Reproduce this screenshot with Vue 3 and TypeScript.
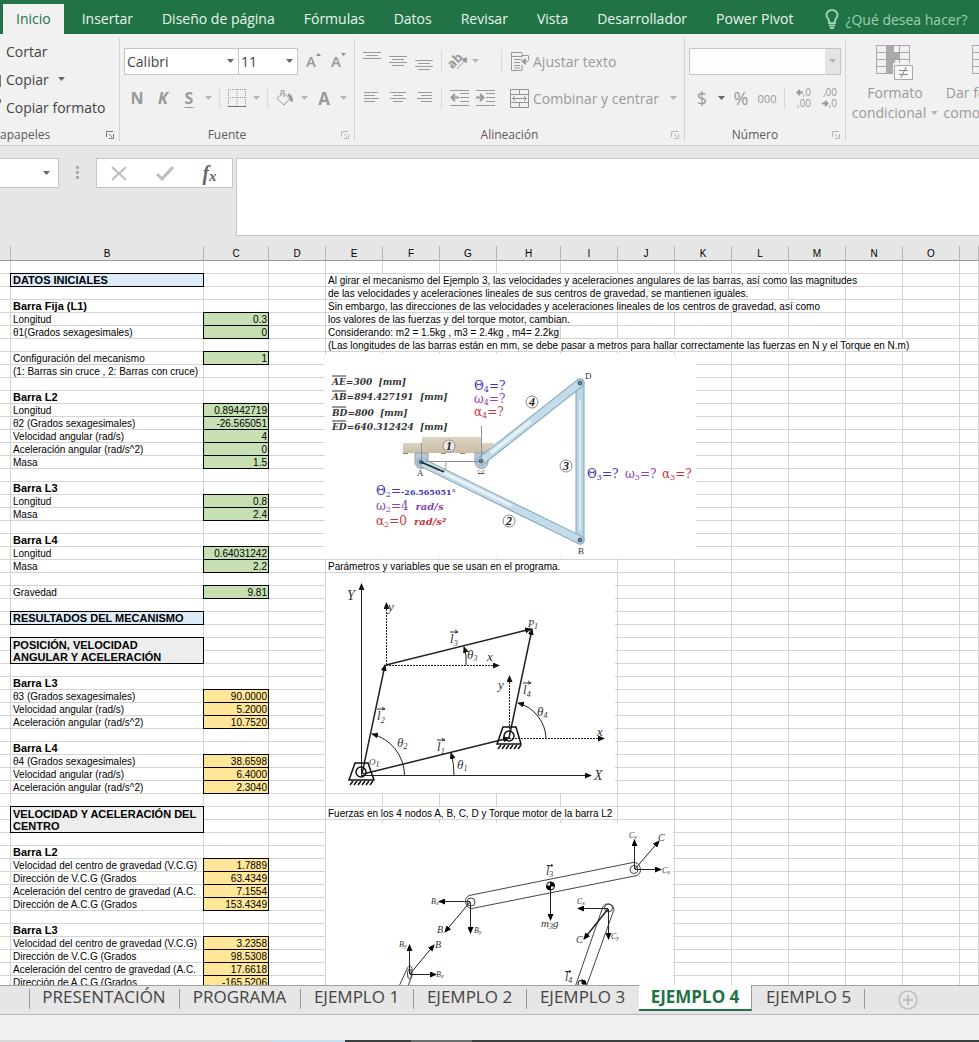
<script setup lang="ts">
type Tone = 'green' | 'gold'
interface RowData {
  label?: string
  kind?: 'bold' | 'blue' | 'grey'
  value?: string
  tone?: Tone
  note?: string
  span?: number
  covered?: boolean
}
interface Mark {
  x: number
  y: number
  t: string
  s?: string
  size?: number
}

const menu = ['Inicio', 'Insertar', 'Diseño de página', 'Fórmulas', 'Datos', 'Revisar', 'Vista', 'Desarrollador', 'Power Pivot']
const columns = ['', 'B', 'C', 'D', 'E', 'F', 'G', 'H', 'I', 'J', 'K', 'L', 'M', 'N', 'O', '']
const noteColumns = 12

const content: Record<number, RowData> = {
  1: { label: 'DATOS INICIALES', kind: 'blue', note: 'Al girar el mecanismo del Ejemplo 3, las velocidades y aceleraciones angulares de las barras, así como las magnitudes', span: 10 },
  2: { note: 'de las velocidades y aceleraciones lineales de sus centros de gravedad, se mantienen iguales.', span: 8 },
  3: { label: 'Barra Fija (L1)', kind: 'bold', note: 'Sin embargo, las direcciones de las velocidades y aceleraciones lineales de los centros de gravedad, así como', span: 9 },
  4: { label: 'Longitud', value: '0.3', tone: 'green', note: 'los valores de las fuerzas y del torque motor, cambian.', span: 5 },
  5: { label: 'θ1(Grados sexagesimales)', value: '0', tone: 'green', note: 'Considerando: m2 = 1.5kg , m3 = 2.4kg , m4= 2.2kg', span: 4 },
  6: { note: '(Las longitudes de las barras están en mm, se debe pasar a metros para hallar correctamente las fuerzas en N y el Torque en N.m)', span: 11 },
  7: { label: 'Configuración del mecanismo', value: '1', tone: 'green' },
  8: { label: '(1: Barras sin cruce , 2: Barras con cruce)' },
  10: { label: 'Barra L2', kind: 'bold' },
  11: { label: 'Longitud', value: '0.89442719', tone: 'green' },
  12: { label: 'θ2 (Grados sexagesimales)', value: '-26.565051', tone: 'green' },
  13: { label: 'Velocidad angular (rad/s)', value: '4', tone: 'green' },
  14: { label: 'Aceleración angular (rad/s^2)', value: '0', tone: 'green' },
  15: { label: 'Masa', value: '1.5', tone: 'green' },
  17: { label: 'Barra L3', kind: 'bold' },
  18: { label: 'Longitud', value: '0.8', tone: 'green' },
  19: { label: 'Masa', value: '2.4', tone: 'green' },
  21: { label: 'Barra L4', kind: 'bold' },
  22: { label: 'Longitud', value: '0.64031242', tone: 'green' },
  23: { label: 'Masa', value: '2.2', tone: 'green', note: 'Parámetros y variables que se usan en el programa.', span: 5 },
  25: { label: 'Gravedad', value: '9.81', tone: 'green' },
  27: { label: 'RESULTADOS DEL MECANISMO', kind: 'blue' },
  29: { label: 'POSICIÓN, VELOCIDAD\nANGULAR Y ACELERACIÓN', kind: 'grey' },
  30: { covered: true },
  32: { label: 'Barra L3', kind: 'bold' },
  33: { label: 'θ3 (Grados sexagesimales)', value: '90.0000', tone: 'gold' },
  34: { label: 'Velocidad angular (rad/s)', value: '5.2000', tone: 'gold' },
  35: { label: 'Aceleración angular (rad/s^2)', value: '10.7520', tone: 'gold' },
  37: { label: 'Barra L4', kind: 'bold' },
  38: { label: 'θ4 (Grados sexagesimales)', value: '38.6598', tone: 'gold' },
  39: { label: 'Velocidad angular (rad/s)', value: '6.4000', tone: 'gold' },
  40: { label: 'Aceleración angular (rad/s^2)', value: '2.3040', tone: 'gold' },
  42: { label: 'VELOCIDAD Y ACELERACIÓN DEL\nCENTRO', kind: 'grey', note: 'Fuerzas en los 4 nodos A, B, C, D y Torque motor de la barra L2', span: 5 },
  43: { covered: true },
  45: { label: 'Barra L2', kind: 'bold' },
  46: { label: 'Velocidad del centro de gravedad (V.C.G)', value: '1.7889', tone: 'gold' },
  47: { label: 'Dirección de V.C.G (Grados', value: '63.4349', tone: 'gold' },
  48: { label: 'Aceleración del centro de gravedad (A.C.', value: '7.1554', tone: 'gold' },
  49: { label: 'Dirección de A.C.G (Grados', value: '153.4349', tone: 'gold' },
  51: { label: 'Barra L3', kind: 'bold' },
  52: { label: 'Velocidad del centro de gravedad (V.C.G)', value: '3.2358', tone: 'gold' },
  53: { label: 'Dirección de V.C.G (Grados', value: '98.5308', tone: 'gold' },
  54: { label: 'Aceleración del centro de gravedad (A.C.', value: '17.6618', tone: 'gold' },
  55: { label: 'Dirección de A.C.G (Grados', value: '-165.5206', tone: 'gold' },
}
const rows: RowData[] = Array.from({ length: 56 }, (_, i) => content[i] ?? {})

const sheets = [
  { name: 'PRESENTACIÓN', size: 'w150' },
  { name: 'PROGRAMA', size: 'w121' },
  { name: 'EJEMPLO 1', size: 'w113' },
  { name: 'EJEMPLO 2', size: 'w113' },
  { name: 'EJEMPLO 3', size: 'w113' },
  { name: 'EJEMPLO 4', size: 'w113', active: true },
  { name: 'EJEMPLO 5', size: 'w113' },
]

const lengths = [
  { y: 385, a: 'AE', b: '=300  [mm]' },
  { y: 400, a: 'AB', b: '=894.427191  [mm]' },
  { y: 416, a: 'BD', b: '=800  [mm]' },
  { y: 430, a: 'ED', b: '=640.312424  [mm]' },
]
const unknowns = [
  { x: 474, y: 390, g: 'Θ', n: '4', c: 'blue' },
  { x: 474, y: 403, g: 'ω', n: '4', c: 'violet' },
  { x: 474, y: 416, g: 'α', n: '4', c: 'red' },
  { x: 587, y: 478, g: 'Θ', n: '3', c: 'blue' },
  { x: 625, y: 478, g: 'ω', n: '3', c: 'violet' },
  { x: 662, y: 478, g: 'α', n: '3', c: 'red' },
]
const badges = [
  { x: 449, y: 446, n: '1' },
  { x: 509, y: 521, n: '2' },
  { x: 566, y: 466, n: '3' },
  { x: 532, y: 402, n: '4' },
]
const vectors: Mark[] = [
  { x: 450, y: 643, t: 'l', s: '3' },
  { x: 377, y: 720, t: 'l', s: '2' },
  { x: 437, y: 751, t: 'l', s: '1' },
  { x: 523, y: 694, t: 'l', s: '4' },
]
const kinematic: Mark[] = [
  { x: 347, y: 600, t: 'Y', size: 14 },
  { x: 594, y: 780, t: 'X', size: 14 },
  { x: 388, y: 611, t: 'y' },
  { x: 487, y: 661, t: 'x' },
  { x: 498, y: 689, t: 'y' },
  { x: 597, y: 736, t: 'x' },
  { x: 467, y: 659, t: 'θ', s: '3' },
  { x: 397, y: 747, t: 'θ', s: '2' },
  { x: 457, y: 769, t: 'θ', s: '1' },
  { x: 537, y: 716, t: 'θ', s: '4' },
  { x: 369, y: 765, t: 'O', s: '1', size: 9 },
  { x: 528, y: 627, t: 'P', s: '1', size: 10 },
]
const forces: Mark[] = [
  { x: 629, y: 838, t: 'C', s: 'y', size: 8 },
  { x: 658, y: 841, t: 'C', size: 10 },
  { x: 662, y: 873, t: 'C', s: 'x', size: 8 },
  { x: 431, y: 904, t: 'B', s: 'x', size: 8 },
  { x: 437, y: 933, t: 'B', size: 10 },
  { x: 474, y: 933, t: 'B', s: 'y', size: 8 },
  { x: 577, y: 904, t: 'C', s: 'x', size: 8 },
  { x: 576, y: 943, t: 'C', size: 10 },
  { x: 611, y: 939, t: 'C', s: 'y', size: 8 },
  { x: 399, y: 947, t: 'B', s: 'y', size: 8 },
  { x: 435, y: 948, t: 'B', size: 10 },
  { x: 436, y: 977, t: 'B', s: 'x', size: 8 },
]
const hatch = [0, 4, 8, 12, 16, 20]
</script>

<template>
  <div class="app">
    <nav class="tabs" aria-label="Cinta">
      <a v-for="(m, i) in menu" :key="m" href="#" class="tab" :class="{ on: i === 0 }">{{ m }}</a>
      <a href="#" class="tell">
        <svg width="14" height="20" viewBox="0 0 14 20" fill="none" stroke="#9bd0ae" stroke-width="2">
          <path d="M4 14v-2C4 10 1.500 9 1.500 6a5.500 5 0 0 1 11 0c0 3-2.500 4-2.500 6v2z" /><path d="M4 16.500h6M5 19h4" />
        </svg>
        <span>¿Qué desea hacer?</span>
      </a>
    </nav>

    <div class="ribbon">
      <section class="group clip">
        <div class="stack">
          <button class="cmd">Cortar</button>
          <button class="cmd"><i class="edge tall"></i>Copiar <svg class="caret dark" viewBox="0 0 7 4"><path d="M0 0h7L3.500 4z" /></svg></button>
          <button class="cmd"><i class="edge short"></i>Copiar formato</button>
        </div>
        <div class="foot"><span class="name left">apapeles</span><button class="launch strong" aria-label="Portapapeles"><svg viewBox="0 0 8 8"><path d="M.5 6V.5H7M3 3l3 3M7.500 3v4.500H3" /></svg></button></div>
      </section>

      <section class="group font">
        <div class="line">
          <div class="combo face"><select aria-label="Fuente"><option>Calibri</option></select><svg class="caret dark" viewBox="0 0 7 4"><path d="M0 0h7L3.500 4z" /></svg></div>
          <div class="combo size"><select aria-label="Tamaño"><option>11</option></select><svg class="caret dark" viewBox="0 0 7 4"><path d="M0 0h7L3.500 4z" /></svg></div>
          <button class="ico grow" aria-label="Aumentar"><b class="big">A</b><svg width="6" height="18" viewBox="0 0 6 18"><path d="M0 4h5L2.500 1z" fill="#8d8d8d" /></svg></button>
          <button class="ico grow" aria-label="Disminuir"><b class="big">A</b><svg width="6" height="18" viewBox="0 0 6 18"><path d="M0 1h5L2.500 4z" fill="#8d8d8d" /></svg></button>
        </div>
        <div class="line second">
          <button class="ico w26"><b>N</b></button>
          <button class="ico w26"><b><em>K</em></b></button>
          <button class="ico w26"><b class="under">S</b></button>
          <button class="ico w13" aria-label="Subrayado"><svg class="caret" viewBox="0 0 7 4"><path d="M0 0h7L3.500 4z" /></svg></button>
          <i class="bar"></i>
          <button class="ico w26" aria-label="Bordes">
            <svg width="18" height="18" viewBox="0 0 18 18" fill="none" stroke="#9c97a0"><path d="M.5 0v17M17.500 0v17M9 0v17M0 .5h18M0 8.500h18" stroke-dasharray="1 1" /><path d="M0 17.500h18" stroke="#777" /></svg>
          </button>
          <button class="ico w13" aria-label="Más bordes"><svg class="caret" viewBox="0 0 7 4"><path d="M0 0h7L3.500 4z" /></svg></button>
          <i class="bar"></i>
          <button class="ico w26" aria-label="Relleno">
            <svg width="18" height="18" viewBox="0 0 18 18" fill="none" stroke="#999"><path d="M7 3.500l7 6-6 6.500-7-6.500zM5 7V1.500h3V8" /><path d="M12 5c3 0 5 3 4 8-2-1-2-3-2-4z" fill="#999" /></svg>
          </button>
          <button class="ico w13" aria-label="Más rellenos"><svg class="caret" viewBox="0 0 7 4"><path d="M0 0h7L3.500 4z" /></svg></button>
          <button class="ico w26"><b class="wide">A</b></button>
          <button class="ico w13" aria-label="Color"><svg class="caret" viewBox="0 0 7 4"><path d="M0 0h7L3.500 4z" /></svg></button>
        </div>
        <div class="foot"><span class="name">Fuente</span><button class="launch" aria-label="Fuente"><svg viewBox="0 0 8 8"><path d="M.5 6V.5H7M3 3l3 3M7.500 3v4.500H3" /></svg></button></div>
      </section>

      <section class="group align">
        <div class="line">
          <button class="ico w26" aria-label="Arriba"><svg width="18" height="20" viewBox="0 0 18 20" stroke="#999"><path d="M0 1.500h18M3 4.500h12M0 7.500h18" /></svg></button>
          <button class="ico w26" aria-label="Medio"><svg width="18" height="20" viewBox="0 0 18 20" stroke="#999"><path d="M0 5.500h18M3 8.500h12M0 11.500h18M3 14.500h12" /></svg></button>
          <button class="ico w26" aria-label="Abajo"><svg width="18" height="20" viewBox="0 0 18 20" stroke="#999"><path d="M0 9.500h18M3 12.500h12M0 15.500h18M3 18.500h12" /></svg></button>
          <i class="bar"></i>
          <button class="ico w26" aria-label="Orientación">
            <svg class="free" width="20" height="20" viewBox="0 0 20 20"><text x="-2" y="14" class="ab" transform="rotate(-45 6 10)">ab</text><path d="M8 18L17 8M18 7l-5 1 4 4z" stroke="#999" fill="#999" /></svg>
          </button>
          <svg class="caret" viewBox="0 0 7 4"><path d="M0 0h7L3.500 4z" /></svg>
          <i class="bar off"></i>
          <button class="cmd soft">
            <svg width="20" height="19" viewBox="0 0 20 19" fill="none" stroke="#999"><path d="M12 13v5.500H1.500V.5H12v5M1.500 4.500H12M4 7.500h8M4 10.500h6M4 13.500h6M4 16h6M12 3.500h6.500V8q0 2-4 2" /><path d="M16 6v7l-5-3.500z" fill="#999" stroke="none" /></svg>Ajustar texto
          </button>
        </div>
        <div class="line second">
          <button class="ico w26" aria-label="Izquierda"><svg width="16" height="14" viewBox="0 0 16 14" stroke="#999"><path d="M0 1.500h14M0 4.500h11M0 7.500h15M0 10.500h11" /></svg></button>
          <button class="ico w26" aria-label="Centro"><svg width="16" height="14" viewBox="0 0 16 14" stroke="#999"><path d="M0 1.500h16M3 4.500h10M0 7.500h16M3 10.500h10" /></svg></button>
          <button class="ico w26" aria-label="Derecha"><svg width="16" height="14" viewBox="0 0 16 14" stroke="#999"><path d="M2 1.500h14M5 4.500h11M1 7.500h15M5 10.500h11" /></svg></button>
          <i class="bar"></i>
          <button class="ico w26" aria-label="Reducir sangría"><svg width="19" height="18" viewBox="0 0 19 18" stroke="#999"><path d="M0 1.500h19M10 4.500h9M10 8.500h9M10 12.500h9M0 16.500h19" /><path d="M9 8.500H2M5 5L1.500 8.500 5 12" fill="none" stroke-width="2" /></svg></button>
          <button class="ico w26" aria-label="Aumentar sangría"><svg width="19" height="18" viewBox="0 0 19 18" stroke="#999"><path d="M0 1.500h19M10 4.500h9M10 8.500h9M10 12.500h9M0 16.500h19" /><path d="M0 8.500h7M4 5l3.500 3.500L4 12" fill="none" stroke-width="2" /></svg></button>
          <button class="cmd soft last">
            <svg width="20" height="19" viewBox="0 0 20 19" fill="none" stroke="#958f99"><path d="M.5.5h18v18H.5zM.5 5.500h18M.5 13.500h18M9.500.5v5M9.500 13.500v5M3 9.500h13M5 7L2.500 9.500 5 12M14 7l2.500 2.500L14 12" /></svg>Combinar y centrar
            <svg class="caret" viewBox="0 0 7 4"><path d="M0 0h7L3.500 4z" /></svg>
          </button>
        </div>
        <div class="foot"><span class="name">Alineación</span><button class="launch" aria-label="Alineación"><svg viewBox="0 0 8 8"><path d="M.5 6V.5H7M3 3l3 3M7.500 3v4.500H3" /></svg></button></div>
      </section>

      <section class="group number">
        <div class="line">
          <div class="combo fmt"><select aria-label="Formato de número" disabled><option></option></select><i class="drop"><svg class="caret" viewBox="0 0 7 4"><path d="M0 0h7L3.500 4z" /></svg></i></div>
        </div>
        <div class="line second">
          <button class="ico w26 money">$</button>
          <button class="ico w13" aria-label="Monedas"><svg class="caret dark" viewBox="0 0 7 4"><path d="M0 0h7L3.500 4z" /></svg></button>
          <button class="ico w26 money">%</button>
          <button class="ico w26 zeros">000</button>
          <i class="bar"></i>
          <button class="ico w26 dec" aria-label="Aumentar decimales"><span><svg width="7" height="7" viewBox="0 0 7 7" fill="none" stroke="#999" stroke-width="2"><path d="M7 3.500H1M4 1L1.500 3.500 4 6" /></svg>,0</span><span>,00</span></button>
          <button class="ico w26 dec" aria-label="Disminuir decimales"><span>,00</span><span><svg width="7" height="7" viewBox="0 0 7 7" fill="none" stroke="#999" stroke-width="2"><path d="M0 3.500h6M3 1l2.500 2.500L3 6" /></svg>,0</span></button>
        </div>
        <div class="foot"><span class="name">Número</span><button class="launch" aria-label="Número"><svg viewBox="0 0 8 8"><path d="M.5 6V.5H7M3 3l3 3M7.500 3v4.500H3" /></svg></button></div>
      </section>

      <section class="styles">
        <button class="large">
          <svg width="38" height="36" viewBox="0 0 38 36" fill="none" stroke="#aaa5ad"><path d="M.5.500h33v28H.5zM.5 7.500h33M.5 14.500h33M.5 21.500h33M10.500.5v28M23.500.5v28" /><path d="M11 1h7v6h-7zM11 8h12v6H11zM11 15h8v6h-8zM11 22h6v6h-6z" fill="#aaa" stroke="none" /><path d="M17 18h21v18H17z" fill="#f1f1f1" stroke="none" /><path d="M18.500 20.500h18v14h-18z" fill="#faf7fb" /><path d="M23 25.500h9M23 29.500h9M30 22l-5 11" stroke="#888" /></svg>
          <span>Formato</span><span>condicional <svg class="caret" viewBox="0 0 7 4"><path d="M0 0h7L3.500 4z" /></svg></span>
        </button>
        <button class="large second-style">
          <svg width="38" height="36" viewBox="0 0 38 36" fill="none" stroke="#aaa5ad"><path d="M5.500.500h33v28h-33zM5.500 7.500h33M5.500 14.500h33M5.500 21.500h33M13.500.5v28" /></svg>
          <span>Dar formato</span><span>como tabla <svg class="caret" viewBox="0 0 7 4"><path d="M0 0h7L3.500 4z" /></svg></span>
        </button>
      </section>
    </div>

    <div class="formula">
      <div class="namebox"><select aria-label="Cuadro de nombres"><option></option></select><svg class="caret dark" viewBox="0 0 7 4"><path d="M0 0h7L3.500 4z" /></svg></div>
      <svg class="dots" width="4" height="14" viewBox="0 0 4 14" fill="#aaa"><path d="M0 0h3v3H0zM0 5h3v3H0zM0 10h3v3H0z" /></svg>
      <div class="entry">
        <button aria-label="Cancelar"><svg width="17" height="15" viewBox="0 0 17 15" stroke="#bdbdbd" stroke-width="2"><path d="M1 1l14 13M15 1L1 14" /></svg></button>
        <button aria-label="Introducir"><svg width="18" height="15" viewBox="0 0 18 15" fill="none" stroke="#bdbdbd" stroke-width="3"><path d="M1 8l5 5L17 1" /></svg></button>
        <button class="fx"><em>f</em><em class="small">x</em></button>
      </div>
      <textarea aria-label="Barra de fórmulas"></textarea>
    </div>

    <main class="sheet">
      <table>
        <colgroup>
          <col class="ca" /><col class="cb" /><col class="cc" /><col v-for="n in 4" :key="n" class="cn" /><col class="ch" /><col v-for="n in 7" :key="'r' + n" class="cn" /><col />
        </colgroup>
        <thead>
          <tr><th v-for="(c, i) in columns" :key="i" scope="col">{{ c }}</th></tr>
        </thead>
        <tbody>
          <tr v-for="(r, k) in rows" :key="k">
            <td></td>
            <td v-if="!r.covered" :class="['lab', r.kind]" :rowspan="r.kind === 'grey' ? 2 : 1">{{ r.label }}</td>
            <td :class="['val', r.tone]">{{ r.value }}</td>
            <td></td>
            <td v-if="r.note" :colspan="r.span" class="note">{{ r.note }}</td>
            <td v-for="n in noteColumns - (r.span ?? 0)" :key="n"></td>
          </tr>
        </tbody>
      </table>

      <svg class="pic one" width="371" height="204" viewBox="325 354 371 204">
        <defs>
          <linearGradient id="wood" x1="0" y1="0" x2="0" y2="1"><stop offset="0" stop-color="#ddd5c3" /><stop offset="1" stop-color="#c9bda4" /></linearGradient>
        </defs>
        <path d="M403 443h92l-10 10h-82z" fill="url(#wood)" /><path d="M422 437h59v16h-59z" fill="url(#wood)" />
        <path d="M403 453.500h79" stroke="#8b8069" stroke-dasharray="5 14" />
        <path d="M415 453h13v9a6 6 0 0 1-13 0zM475 453h13v9a6 6 0 0 1-13 0z" fill="#b9c9d3" stroke="#8fa2ae" />
        <g stroke-linecap="round" fill="none">
          <path d="M580 383V540" stroke="#7fa5b9" stroke-width="9" /><path d="M580 383V540" stroke="#b9d6e5" stroke-width="7" /><path d="M580 400V530" stroke="#d9eaf3" stroke-width="2" />
          <path d="M421 462L580 540" stroke="#7fa5b9" stroke-width="9" /><path d="M421 462L580 540" stroke="#c3dce8" stroke-width="7" /><path d="M440 471L510 505" stroke="#e8f3f8" stroke-width="3" />
          <path d="M481 461L580 383" stroke="#7fa5b9" stroke-width="9" /><path d="M481 461L580 383" stroke="#c3dce8" stroke-width="7" /><path d="M492 452L530 422" stroke="#e8f3f8" stroke-width="3" />
        </g>
        <g fill="#6c8593" stroke="#41545f"><circle cx="421" cy="462" r="2" /><circle cx="481" cy="461" r="2" /><circle cx="580" cy="383" r="2" /><circle cx="580" cy="540" r="2" /></g>
        <g fill="none" stroke="#8d9398"><path d="M421.500 443V460M481.500 426V460M425 461.500H479M446 462q1 6-3 10" /></g>
        <path d="M421 462L444 472" stroke="#20262a" stroke-width="1.500" />
        <g v-for="l in lengths" :key="l.a">
          <text :x="332" :y="l.y" class="len">{{ l.a }}{{ l.b }}</text><path :d="`M332 ${l.y - 9}h14`" stroke="#333" />
        </g>
        <text v-for="u in unknowns" :key="u.g + u.n" :x="u.x" :y="u.y" class="greek" :class="u.c">{{ u.g }}<tspan dy="2" class="sub">{{ u.n }}</tspan><tspan dy="-2">=?</tspan></text>
        <text x="376" y="495" class="greek blue">Θ<tspan dy="2" class="sub">2</tspan><tspan dy="-2">=</tspan><tspan class="deg">-26.565051°</tspan></text>
        <text x="376" y="510" class="greek violet">ω<tspan dy="2" class="sub">2</tspan><tspan dy="-2">=4</tspan><tspan dx="7" class="unit">rad/s</tspan></text>
        <text x="376" y="525" class="greek red">α<tspan dy="2" class="sub">2</tspan><tspan dy="-2">=0</tspan><tspan dx="7" class="unit">rad/s²</tspan></text>
        <g v-for="b in badges" :key="b.n"><circle :cx="b.x" :cy="b.y" r="6" fill="#fff" fill-opacity=".6" stroke="#888" /><text :x="b.x" :y="b.y + 4" class="badge">{{ b.n }}</text></g>
        <g class="joint"><text x="417" y="476">A</text><text x="585" y="379">D</text><text x="578" y="554">B</text><text x="478" y="475" transform="rotate(-90 481 472)">E</text></g>
      </svg>

      <svg class="pic two" width="289" height="220" viewBox="326 573 289 220">
        <defs><marker id="tip" markerUnits="userSpaceOnUse" markerWidth="7" markerHeight="6" refX="6" refY="3" orient="auto"><path d="M0 0L7 3 0 6z" fill="#111" /></marker></defs>
        <g fill="none" stroke="#222" marker-end="url(#tip)">
          <path d="M361.500 775V584" /><path d="M361 775.500H591" />
          <path d="M386.500 665V603" stroke-dasharray="2 1" /><path d="M386 665.500H499" stroke-dasharray="2 1" />
          <path d="M509.500 738V676" stroke-dasharray="2 1" /><path d="M509 738.500H604" stroke-dasharray="2 1" />
          <path d="M362 774L385 665" stroke-width="1.500" /><path d="M386 665L531 629" stroke-width="1.500" /><path d="M363 774L509 738" stroke-width="1.500" /><path d="M509 738L532 629" stroke-width="1.500" />
          <path d="M404.500 775A43 43 0 0 0 372 734" /><path d="M454 775Q454 763 451 753" /><path d="M466 665Q467 656 464 647" /><path d="M546 738A38 38 0 0 0 518 703" />
        </g>
        <g fill="none" stroke="#111" stroke-width="1.500"><path d="M355 763h13l6 17h-25z" /><circle cx="361" cy="772" r="5" /><path d="M503 727h13l5 17h-24z" /><circle cx="509" cy="736" r="5" /></g>
        <g stroke="#111" stroke-width="1.500"><path v-for="h in hatch" :key="h" :d="`M${353 + h} 781l-3 4M${501 + h} 745l-3 4`" /></g>
        <g v-for="v in vectors" :key="v.s"><text :x="v.x" :y="v.y" font-size="13" class="math">{{ v.t }}<tspan dy="3" class="sub">{{ v.s }}</tspan></text><path :d="`M${v.x} ${v.y - 11}h8m-3-2l3 2-3 1`" fill="none" stroke="#333" /></g>
        <text v-for="(m, i) in kinematic" :key="i" :x="m.x" :y="m.y" :font-size="m.size ?? 13" class="math">{{ m.t }}<tspan v-if="m.s" dy="2" class="sub">{{ m.s }}</tspan></text>
      </svg>

      <svg class="pic three" width="347" height="170" viewBox="326 823 347 170">
        <defs><marker id="head" markerUnits="userSpaceOnUse" markerWidth="7" markerHeight="6" refX="6" refY="3" orient="auto"><path d="M0 0L7 3 0 6z" fill="#000" /></marker></defs>
        <g fill="none" stroke="#444">
          <path d="M469 895.500L633 862.500A7 7 0 0 1 637 875.500L472 908.500A7 7 0 0 1 469 895.500z" />
          <circle cx="471" cy="902" r="4" /><circle cx="634" cy="869.500" r="4" />
          <path d="M603 906.500A6 6 0 0 1 614 909.500L584 993M603 906.500L573 993" /><circle cx="608.500" cy="908" r="4" />
          <path d="M406 971Q409 963 412 968V976L405 993M406 971L396 993" /><ellipse cx="409.500" cy="974" rx="2" ry="5" />
        </g>
        <g fill="none" stroke="#222" marker-end="url(#head)">
          <path d="M634.500 869V840" /><path d="M635 869L659 841" /><path d="M635 869.500H661" />
          <path d="M470 901.500H439" /><path d="M470 902L445 932" /><path d="M470.500 902V933" /><path d="M550.500 887V920" />
          <path d="M608 908.500H578" /><path d="M608 909L584 939" stroke-width="1.500" /><path d="M608.500 909V939" />
          <path d="M409.500 974V945" /><path d="M410 974L434 945" /><path d="M410 974.500H436" />
        </g>
        <g stroke="#000"><circle cx="550.500" cy="886" r="4" fill="#fff" /><path d="M550.500 886V882A4 4 0 0 1 554.500 886zM550.500 886V890A4 4 0 0 1 546.500 886z" /><circle cx="582" cy="984" r="4" fill="#fff" /><path d="M582 984V980A4 4 0 0 1 586 984z" /></g>
        <text x="546" y="875" font-size="12" class="math">l<tspan dy="2" class="sub">3</tspan></text><path d="M547 865.500h6m-2-1l2 1-2 1" fill="none" stroke="#333" />
        <text x="565" y="981" font-size="12" class="math">l<tspan dy="2" class="sub">4</tspan></text><path d="M565 971.500h6m-2-1l2 1-2 1" fill="none" stroke="#333" />
        <text x="541" y="927" font-size="11" class="math">m<tspan dy="2" class="sub">3</tspan><tspan dy="-2">g</tspan></text>
        <text v-for="(m, i) in forces" :key="i" :x="m.x" :y="m.y" :font-size="m.size" class="math">{{ m.t }}<tspan v-if="m.s" dy="1" class="tiny">{{ m.s }}</tspan></text>
      </svg>
    </main>

    <nav class="sheets" aria-label="Hojas">
      <a v-for="s in sheets" :key="s.name" href="#" :class="[s.size, { active: s.active }]">{{ s.name }}</a>
      <button aria-label="Hoja nueva"><svg width="20" height="20" viewBox="0 0 20 20" fill="none" stroke="#bfbfbf"><circle cx="10" cy="10" r="9" stroke-width="1.500" /><path d="M10 5v10M5 10h10" stroke-width="2" /></svg></button>
    </nav>
    <footer class="status"></footer>
    <div class="strip"></div>
  </div>
</template>

<style>
html, body { margin: 0; overflow: hidden; }
</style>

<style scoped>
* { box-sizing: border-box; }
.app { height: 100vh; display: flex; flex-direction: column; overflow: hidden; background: #e6e6e6; font-family: "Open Sans", "Noto Sans", sans-serif; font-size: 14px; color: #444; }
button { border: 0; padding: 0; margin: 0; background: none; font: inherit; color: inherit; }
a { text-decoration: none; color: inherit; }
i { font-style: normal; }
.tabs { flex: none; height: 34px; display: flex; padding: 4px 0 0 3px; background: #217346; overflow: hidden; }
.tab { flex: none; height: 30px; padding: 0 14px 0 15px; line-height: 30px; color: #e9f5ee; white-space: nowrap; }
.tab.on { background: #f1f1f1; color: #217346; padding: 0 13px; margin-right: 3px; }
.tell { display: flex; align-items: center; gap: 6px; margin-left: 18px; color: #9bd0ae; white-space: nowrap; }
.ribbon { flex: none; height: 112px; display: flex; background: #f1f1f1; border-bottom: 1px solid #cfcfcf; overflow: hidden; }
.group { flex: none; display: flex; flex-direction: column; margin: 4px 0; border-right: 1px solid #d4d4d4; padding-top: 10px; }
.clip { width: 120px; padding-top: 0; }
.font { width: 235px; padding-left: 4px; }
.align { width: 330px; padding-left: 4px; }
.number { width: 161px; padding-left: 4px; }
.stack { display: flex; flex-direction: column; align-items: flex-start; margin-top: -1px; }
.stack .cmd { height: 28px; padding-left: 6px; position: relative; gap: 9px; }
.edge { position: absolute; left: 0; width: 1px; background: #777; }
.edge.tall { top: 10px; height: 12px; }
.edge.short { top: 6px; height: 4px; }
.cmd { display: flex; align-items: center; white-space: nowrap; }
.soft { color: #9a9a9a; gap: 3px; margin-left: 8px; }
.soft.last { margin-left: 12px; }
.soft .caret { margin-left: 8px; }
.caret { flex: none; width: 7px; height: 4px; fill: #b5b5b5; }
.caret.dark { fill: #666; }
.line { display: flex; align-items: center; height: 26px; }
.second { margin-top: 11px; }
.foot { margin-top: auto; height: 12px; line-height: 12px; display: flex; align-items: center; font-size: 12px; color: #5c5c5c; }
.name { flex: 1; text-align: center; padding-right: 11px; }
.name.left { text-align: left; padding-right: 0; }
.launch { width: 8px; height: 8px; margin-right: 5px; display: flex; }
.launch svg { width: 8px; height: 8px; fill: none; stroke: #b5b5b5; }
.launch.strong svg { stroke: #777; }
.combo { display: grid; align-items: center; height: 27px; background: #fff; border: 1px solid #c6c6c6; }
.combo > *, .namebox > * { grid-area: 1 / 1; }
.combo > .caret, .namebox > .caret { justify-self: end; margin-right: 4px; pointer-events: none; }
select { appearance: none; border: 0; background: none; font: inherit; color: #444; width: 100%; height: 100%; padding: 0 2px; margin: 0; border-radius: 0; }
.face { width: 115px; }
.size { width: 59px; border-left: 0; }
.fmt { width: 152px; background: #fdfdfd; }
.drop { justify-self: end; width: 15px; height: 25px; background: #e4e4e4; display: flex; align-items: center; justify-content: center; }
.ico { flex: none; display: flex; align-items: center; justify-content: center; height: 24px; color: #999; font-size: 16px; }
.grow { width: 16px; margin-left: 8px; }
.grow + .grow { margin-left: 9px; }
.big { font-size: 15px; font-weight: 600; }
.wide { font-size: 17px; }
.w13 { width: 13px; }
.w26 { width: 26px; }
.under { text-decoration: underline; text-underline-offset: 3px; }
.bar { flex: none; width: 1px; height: 22px; margin: 0 4px; background: #d9d9d9; }
.off { margin-left: 22px; margin-right: 0; }
.free { overflow: visible; }
.ab { font: bold 13px "Open Sans", sans-serif; fill: #999; }
.money { font-size: 18px; }
.zeros { font-size: 11px; }
.dec { flex-direction: column; font-size: 10px; line-height: 11px; align-items: flex-end; padding-right: 4px; }
.dec span { display: flex; align-items: center; height: 11px; }
.styles { flex: 1; display: flex; min-width: 0; overflow: hidden; }
.large { flex: none; width: 98px; padding-top: 11px; display: flex; flex-direction: column; align-items: center; color: #999; line-height: 20px; white-space: nowrap; }
.large svg:first-child { margin-bottom: 2px; }
.large span { display: flex; align-items: center; gap: 5px; }
.large span svg.caret { margin-bottom: 0; }
.second-style { width: 84px; }
.formula { flex: none; height: 100px; display: flex; align-items: flex-start; padding-top: 12px; }
.namebox { display: grid; align-items: center; width: 59px; height: 30px; background: #fff; border: 1px solid #c6c6c6; border-left: 0; }
.namebox > .caret { margin-right: 8px; }
.dots { margin: 8px 16px 0 17px; }
.entry { width: 137px; height: 30px; display: flex; align-items: center; justify-content: space-around; background: #fff; border: 1px solid #c6c6c6; }
.entry button { display: flex; width: 40px; justify-content: center; }
.fx { font: bold 20px "Liberation Serif", serif; color: #666; }
.fx .small { font-size: 15px; padding-top: 6px; }
textarea { flex: 1; height: 78px; margin: 0 0 0 3px; border: 1px solid #c6c6c6; border-right: 0; background: #fff; resize: none; outline: none; }
.sheet { flex: 1; min-height: 0; position: relative; overflow: hidden; background: #fff; font-family: "Liberation Sans", Arial, sans-serif; color: #000; }
table { width: 100%; table-layout: fixed; border-collapse: separate; border-spacing: 0; font-size: 10px; line-height: 10px; }
.ca { width: 11px; }
.cb { width: 193px; }
.cc { width: 65px; }
.cn { width: 57px; }
.ch { width: 64px; }
th { height: 15px; padding: 2px 0 0; font-weight: 400; background: #e6e6e6; border-right: 1px solid #b5b5b5; border-bottom: 1px solid #999; line-height: 12px; }
td { height: 13px; padding: 2px 2px 0; border-right: 1px solid #d4d4d4; border-bottom: 1px solid #d4d4d4; white-space: nowrap; overflow: hidden; }
.note { overflow: visible; }
.val { text-align: right; padding: 2px 1px 0; }
.green, .gold, .blue.lab, .grey.lab { border-color: #000; box-shadow: -1px 0 #000, 0 -1px #000, -1px -1px #000; position: relative; }
.green { background: #c6e0b4; }
.gold { background: #ffe699; }
.lab.bold, .lab.blue, .lab.grey { font-weight: 700; font-size: 11px; line-height: 12px; padding-top: 0; }
.lab.blue { background: #ddebf7; }
.lab.grey { background: #ededed; white-space: pre-line; line-height: 12px; padding-top: 1px; }
.pic { position: absolute; background: #fff; }
.one { left: 325px; top: 108px; }
.two { left: 326px; top: 327px; }
.three { left: 326px; top: 577px; }
.len { font: italic bold 9px "DejaVu Serif", serif; fill: #333; white-space: pre; }
.greek { font: 12px "DejaVu Serif", serif; }
.greek.blue { fill: #3d35b5; }
.greek.violet { fill: #8c3fae; }
.greek.red { fill: #c8363c; }
.sub { font-size: 8px; }
.tiny { font-size: 6px; }
.deg { font-size: 8px; font-weight: 700; }
.unit { font-size: 10px; font-style: italic; font-weight: 700; }
.badge { font: italic bold 12px "Liberation Serif", serif; text-anchor: middle; fill: #222; }
.joint text { font: 9px "Liberation Serif", serif; fill: #333; }
.math { font-family: "Liberation Serif", serif; font-style: italic; fill: #333; }
.sheets { flex: none; height: 30px; display: flex; padding-left: 29px; background: #e6e6e6; border-top: 1px solid #a0a0a0; border-bottom: 1px solid #b8b8b8; font-size: 17px; }
.sheets a { flex: none; height: 25px; line-height: 22px; text-align: center; white-space: nowrap; background: linear-gradient(#999, #999) 0 3px / 1px 20px no-repeat; }
.sheets a:nth-last-child(2) { background: linear-gradient(#999, #999) 100% 3px / 1px 20px no-repeat; }
.sheets .active { background: #fff; color: #217346; font-weight: 700; border-bottom: 2px solid #217346; margin-top: -1px; height: 26px; line-height: 24px; border-right: 1px solid #999; }
.w150 { width: 150px; }
.w121 { width: 121px; }
.w113 { width: 113px; }
.sheets button { margin-left: 33px; padding-top: 4px; height: 24px; }
.status { flex: none; height: 25px; background: #f0f0f0; }
.strip { flex: none; height: 2px; background: linear-gradient(90deg, #d8d8d8 0 272px, #c8e0ec 272px 345px, #3a3f40 345px 411px, #6a6e6f 411px 472px, #3a3f40 472px); }
</style>
